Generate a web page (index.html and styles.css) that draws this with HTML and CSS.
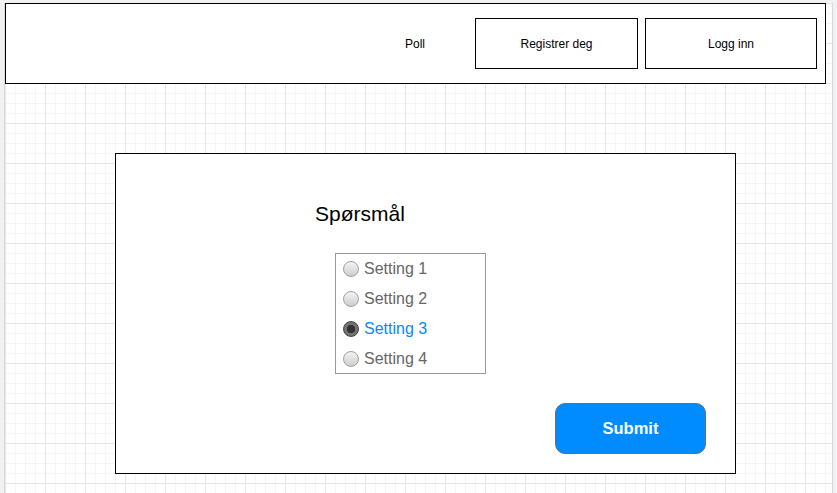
FILE: index.html
```html
<!DOCTYPE html>
<html lang="no">
<head>
<meta charset="utf-8">
<title>Poll</title>
<link rel="stylesheet" href="styles.css">
</head>
<body>
<div class="canvas">
  <header class="topbar">
    <span class="nav-link">Poll</span>
    <a class="nav-btn nav-btn-reg">Registrer deg</a>
    <a class="nav-btn nav-btn-login">Logg inn</a>
  </header>
  <main class="card">
    <h1 class="question">Spørsmål</h1>
    <ul class="options">
      <li class="option"><span class="radio"></span><span class="label">Setting 1</span></li>
      <li class="option"><span class="radio"></span><span class="label">Setting 2</span></li>
      <li class="option option-selected"><span class="radio"></span><span class="label">Setting 3</span></li>
      <li class="option"><span class="radio"></span><span class="label">Setting 4</span></li>
    </ul>
    <button class="submit">Submit</button>
  </main>
</div>
</body>
</html>
```

FILE: styles.css
```css
html, body {
  margin: 0;
  padding: 0;
}
body {
  width: 837px;
  height: 493px;
  overflow: hidden;
  background: #f1f1f3;
  font-family: "Liberation Sans", Arial, sans-serif;
}
.canvas {
  margin: 3px 4px 0 4px;
  height: 490px;
  border-left: 1px solid #d8d8d8;
  border-right: 1px solid #d8d8d8;
  background-color: #ffffff;
  background-image:
    linear-gradient(#e6e6e6 1px, transparent 1px),
    linear-gradient(90deg, #e6e6e6 1px, transparent 1px),
    linear-gradient(#f5f5f5 1px, transparent 1px),
    linear-gradient(90deg, #f5f5f5 1px, transparent 1px);
  background-size: 40px 40px, 40px 40px, 10px 10px, 10px 10px;
  overflow: hidden;
}
.topbar {
  box-sizing: border-box;
  width: 821px;
  height: 81px;
  border: 1px solid #000;
  background: #fff;
  display: flex;
  align-items: center;
  justify-content: flex-end;
  padding-right: 8px;
}
.nav-link {
  width: 60px;
  text-align: center;
  font-size: 12px;
  color: #000;
  margin-right: 30px;
}
.nav-btn {
  box-sizing: border-box;
  height: 51px;
  border: 1px solid #000;
  display: flex;
  align-items: center;
  justify-content: center;
  font-size: 12px;
  color: #000;
}
.nav-btn-reg {
  width: 163px;
  margin-right: 7px;
}
.nav-btn-login {
  width: 172px;
}
.card {
  box-sizing: border-box;
  width: 621px;
  height: 321px;
  margin: 69px 0 0 110px;
  border: 1px solid #000;
  background: #fff;
  display: flex;
  flex-direction: column;
  align-items: flex-start;
  padding: 48px 29px 19px 199px;
}
.question {
  margin: 0;
  font-size: 21px;
  line-height: 24px;
  font-weight: normal;
  color: #000;
}
.options {
  list-style: none;
  margin: 27px 0 0 20px;
  padding: 0;
  box-sizing: border-box;
  width: 151px;
  height: 121px;
  border: 1px solid #999;
}
.option {
  height: 30px;
  display: flex;
  align-items: center;
  padding-left: 7px;
  font-size: 16px;
  color: #666;
}
.radio {
  box-sizing: border-box;
  width: 16px;
  height: 16px;
  border-radius: 50%;
  border: 1px solid #a0a0a0;
  background: linear-gradient(#f4f4f4, #cdcdcd);
  margin-right: 5px;
  flex: none;
}
.option-selected {
  color: #008cff;
}
.option-selected .radio {
  border: 1px solid #444;
  background: radial-gradient(circle, #333 0, #333 4px, #777 4.6px, #666 100%);
}
.submit {
  align-self: flex-end;
  margin-top: 29px;
  box-sizing: border-box;
  width: 151px;
  height: 51px;
  border-radius: 10px;
  border: 1px solid #6e6e6e;
  background: #008cff;
  color: #fff;
  font-family: "Liberation Sans", Arial, sans-serif;
  font-weight: bold;
  font-size: 16.5px;
  padding: 0;
}
```
